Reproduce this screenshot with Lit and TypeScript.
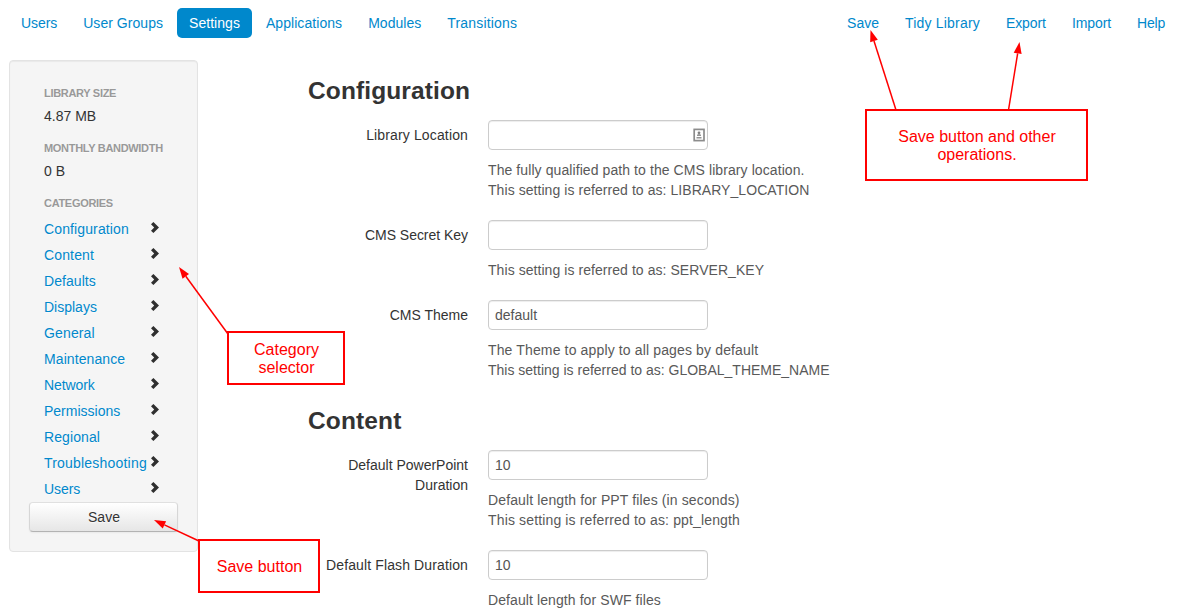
import { LitElement, html, svg, css, nothing } from "lit";
import { customElement, property } from "lit/decorators.js";
import { styleMap } from "lit/directives/style-map.js";

interface Field {
  label: string;
  value: string;
  help: string[];
  picker?: boolean;
}

const LEFT_NAV = ["Users", "User Groups", "Settings", "Applications", "Modules", "Transitions"];
const RIGHT_NAV = ["Save", "Tidy Library", "Export", "Import", "Help"];
const CATEGORIES = [
  "Configuration", "Content", "Defaults", "Displays", "General", "Maintenance",
  "Network", "Permissions", "Regional", "Troubleshooting", "Users",
];

const TRACKING: Record<string, number> = {
  "Users": -0.08,
  "User Groups": 0.05,
  "Settings": 0.03,
  "Applications": 0.06,
  "Modules": 0.03,
  "Transitions": 0.18,
  "Tidy Library": 0.19,
  "Export": -0.08,
  "Import": -0.1,
  "Help": -0.2,
  "Configuration": 0.12,
  "Content": 0.14,
  "Defaults": 0.06,
  "General": 0.14,
  "Maintenance": 0.09,
  "Network": -0.1,
  "Regional": 0.1,
  "Troubleshooting": 0.2,
  "Library Location": 0.14,
  "CMS Secret Key": -0.03,
  "Default Flash Duration": 0.12,
  "The fully qualified path to the CMS library location.": 0.085,
  "This setting is referred to as: LIBRARY_LOCATION": 0.06,
  "This setting is referred to as: SERVER_KEY": 0.06,
  "The Theme to apply to all pages by default": 0.14,
  "Default length for PPT files (in seconds)": 0.125,
  "This setting is referred to as: ppt_length": 0.145,
  "Default length for SWF files": 0.09,
};

const text = (t: string) =>
  html`<span style=${styleMap({ letterSpacing: `${TRACKING[t] ?? 0}px` })}>${t}</span>`;

const SECTIONS: { title: string; fields: Field[] }[] = [
  {
    title: "Configuration",
    fields: [
      {
        label: "Library Location", value: "", picker: true,
        help: ["The fully qualified path to the CMS library location.", "This setting is referred to as: LIBRARY_LOCATION"],
      },
      { label: "CMS Secret Key", value: "", help: ["This setting is referred to as: SERVER_KEY"] },
      {
        label: "CMS Theme", value: "default",
        help: ["The Theme to apply to all pages by default", "This setting is referred to as: GLOBAL_THEME_NAME"],
      },
    ],
  },
  {
    title: "Content",
    fields: [
      {
        label: "Default PowerPoint Duration", value: "10",
        help: ["Default length for PPT files (in seconds)", "This setting is referred to as: ppt_length"],
      },
      { label: "Default Flash Duration", value: "10", help: ["Default length for SWF files"] },
    ],
  },
];

@customElement("nav-pills")
class NavPills extends LitElement {
  @property({ attribute: false }) items: string[] = [];
  @property() active = "";

  static styles = css`
    :host { display: block; }
    .pills { display: flex; gap: 2px; }
    .pill {
      padding: 8px 12px;
      line-height: 14px;
      border-radius: 5px;
      color: #0088cc;
      text-decoration: none;
      white-space: nowrap;
    }
    .active { background: #0088cc; color: #fff; }
  `;

  render() {
    return html`<nav class="pills">
      ${this.items.map((t) => html`<a class="pill ${t === this.active ? "active" : ""}">${text(t)}</a>`)}
    </nav>`;
  }
}

@customElement("side-panel")
class SidePanel extends LitElement {
  static styles = css`
    :host { display: block; }
    .well {
      box-sizing: border-box;
      width: 189px;
      padding: 19px;
      border: 1px solid #e3e3e3;
      border-radius: 4px;
      background: #f5f5f5;
      box-shadow: inset 0 1px 1px rgba(0, 0, 0, 0.05);
    }
    .list { padding: 0 15px; }
    .header {
      padding: 3px 0;
      font-size: 11px;
      font-weight: bold;
      letter-spacing: -0.31px;
      color: #999;
      text-transform: uppercase;
      text-shadow: 0 1px 0 rgba(255, 255, 255, 0.5);
      white-space: nowrap;
    }
    .value + .header { margin-top: 9px; }
    .link {
      display: flex;
      justify-content: space-between;
      padding: 3px 0;
      color: #0088cc;
      text-shadow: 0 1px 0 rgba(255, 255, 255, 0.5);
      white-space: nowrap;
    }
    .name { width: 106px; }
    .chevron { width: 10px; height: 13px; margin: 2px 3px 0 0; flex: none; fill: #2f2f2f; }
    .button {
      display: block;
      box-sizing: border-box;
      width: 100%;
      height: 30px;
      padding: 4px 11px 4px 12px;
      border: 1px solid #ccc;
      border-color: #e0e0e0 #d6d6d6 #b3b3b3;
      border-radius: 4px;
      background: linear-gradient(#fff, #e6e6e6);
      box-shadow: inset 0 1px 0 rgba(255, 255, 255, 0.2), 0 1px 2px rgba(0, 0, 0, 0.05);
      color: #333;
      font: inherit;
      line-height: 20px;
      text-align: center;
      text-shadow: 0 1px 1px rgba(255, 255, 255, 0.75);
    }
  `;

  render() {
    return html`<aside class="well">
      <div class="list">
        <div class="header">Library Size</div>
        <div class="value">4.87 MB</div>
        <div class="header">Monthly Bandwidth</div>
        <div class="value">0 B</div>
        <div class="header">Categories</div>
        ${CATEGORIES.map((c) => html`<a class="link"><span class="name">${text(c)}</span>
          <svg class="chevron" viewBox="0 0 10 13"><path d="M3.4 1 L9 6.5 L3.4 12 L1 9.7 L4.2 6.5 L1 3.3 Z"/></svg></a>`)}
      </div>
      <button class="button">Save</button>
    </aside>`;
  }
}

@customElement("settings-form")
class SettingsForm extends LitElement {
  static styles = css`
    :host { display: block; }
    .title {
      box-sizing: border-box;
      height: 40px;
      margin: 0 0 10px;
      padding-top: 1px;
      font-size: 24.5px;
      line-height: 40px;
      font-weight: bold;
    }
    .group { display: grid; grid-template-columns: 160px auto; column-gap: 20px; margin-bottom: 20px; }
    .label { padding-top: 5px; text-align: right; }
    .box {
      box-sizing: border-box;
      display: flex;
      align-items: center;
      width: 220px;
      height: 30px;
      padding: 4px 2px 4px 6px;
      border: 1px solid #ccc;
      border-radius: 4px;
      box-shadow: inset 0 1px 1px rgba(0, 0, 0, 0.075);
      color: #555;
    }
    .input {
      flex: 1;
      min-width: 0;
      height: 20px;
      padding: 0;
      border: 0;
      outline: 0;
      background: none;
      color: inherit;
      font: inherit;
    }
    .picker { width: 12px; height: 14px; flex: none; }
    .help { margin: 10px 0 0; color: #595959; white-space: nowrap; }
  `;

  field(f: Field) {
    return html`<div class="group">
      <label class="label">${text(f.label)}</label>
      <div>
        <div class="box">
          <input class="input" .value=${f.value} />
          ${f.picker
            ? html`<svg class="picker" viewBox="0 0 12 14">
                <rect x="1.2" y="1.4" width="9.8" height="11.2" fill="#fff" stroke="#8c8c8c" stroke-width="1.7" />
                <circle cx="6" cy="4.8" r="1.4" fill="#808080" />
                <path d="M4 8h4V6.8q-2-1.6-4 0zM3.5 9h5v1.4h-5z" fill="#949494" />
              </svg>`
            : nothing}
        </div>
        <p class="help">${f.help.map((h, i) => (i ? html`<br />${text(h)}` : text(h)))}</p>
      </div>
    </div>`;
  }

  render() {
    return SECTIONS.map((s) => html`<h3 class="title">${text(s.title)}</h3>${s.fields.map((f) => this.field(f))}`);
  }
}

/* Tip and tail coordinates of every annotation arrow. */
const ARROWS = [
  [870.5, 30, 896, 110],
  [1019.5, 42, 1008.5, 110],
  [179, 267, 228, 334],
  [154, 520, 199, 541],
];

@customElement("callout-layer")
class CalloutLayer extends LitElement {
  static styles = css`
    :host { position: absolute; inset: 0; pointer-events: none; }
    .arrows { position: absolute; inset: 0; width: 1180px; height: 615px; }
    .note {
      position: absolute;
      box-sizing: border-box;
      display: flex;
      align-items: center;
      justify-content: center;
      padding: 2px 0 0 1px;
      border: 2px solid #f00;
      background: #fff;
      color: #f00;
      font-size: 16px;
      line-height: 18px;
      text-align: center;
    }
    .operations { left: 865px; top: 109px; width: 223px; height: 72px; }
    .selector { left: 227px; top: 331px; width: 118px; height: 54px; }
    .saving { left: 198px; top: 539px; width: 122px; height: 54px; }
  `;

  arrow([x, y, tx, ty]: number[]) {
    const len = Math.hypot(tx - x, ty - y);
    const ux = (tx - x) / len;
    const uy = (ty - y) / len;
    const bx = x + ux * 11.5;
    const by = y + uy * 11.5;
    const head = `${x},${y} ${bx - uy * 4},${by + ux * 4} ${bx + uy * 4},${by - ux * 4}`;
    return svg`<line x1=${bx} y1=${by} x2=${tx} y2=${ty} stroke="#f00" stroke-width="1.5"/><polygon points=${head} fill="#f00"/>`;
  }

  render() {
    return html`
      <svg class="arrows" viewBox="0 0 1180 615">${ARROWS.map((a) => this.arrow(a))}</svg>
      <div class="note operations"><span>Save button and other<br />operations.</span></div>
      <div class="note selector"><span>Category<br />selector</span></div>
      <div class="note saving"><span>Save button</span></div>
    `;
  }
}

@customElement("app-root")
class AppRoot extends LitElement {
  static styles = css`
    :host {
      display: block;
      position: relative;
      box-sizing: border-box;
      height: 615px;
      overflow: hidden;
      padding: 8px 3px 0 9px;
      background: #fff;
      color: #333;
      font: 14px/20px "Liberation Sans", Arial, sans-serif;
    }
    .top { display: flex; justify-content: space-between; }
    .main { display: flex; align-items: flex-start; gap: 110px; margin-top: 22px; }
    .form { margin-top: 10px; }
  `;

  render() {
    return html`
      <div class="top">
        <nav-pills .items=${LEFT_NAV} active="Settings"></nav-pills>
        <nav-pills .items=${RIGHT_NAV}></nav-pills>
      </div>
      <div class="main">
        <side-panel></side-panel>
        <settings-form class="form"></settings-form>
      </div>
      <callout-layer></callout-layer>
    `;
  }
}
